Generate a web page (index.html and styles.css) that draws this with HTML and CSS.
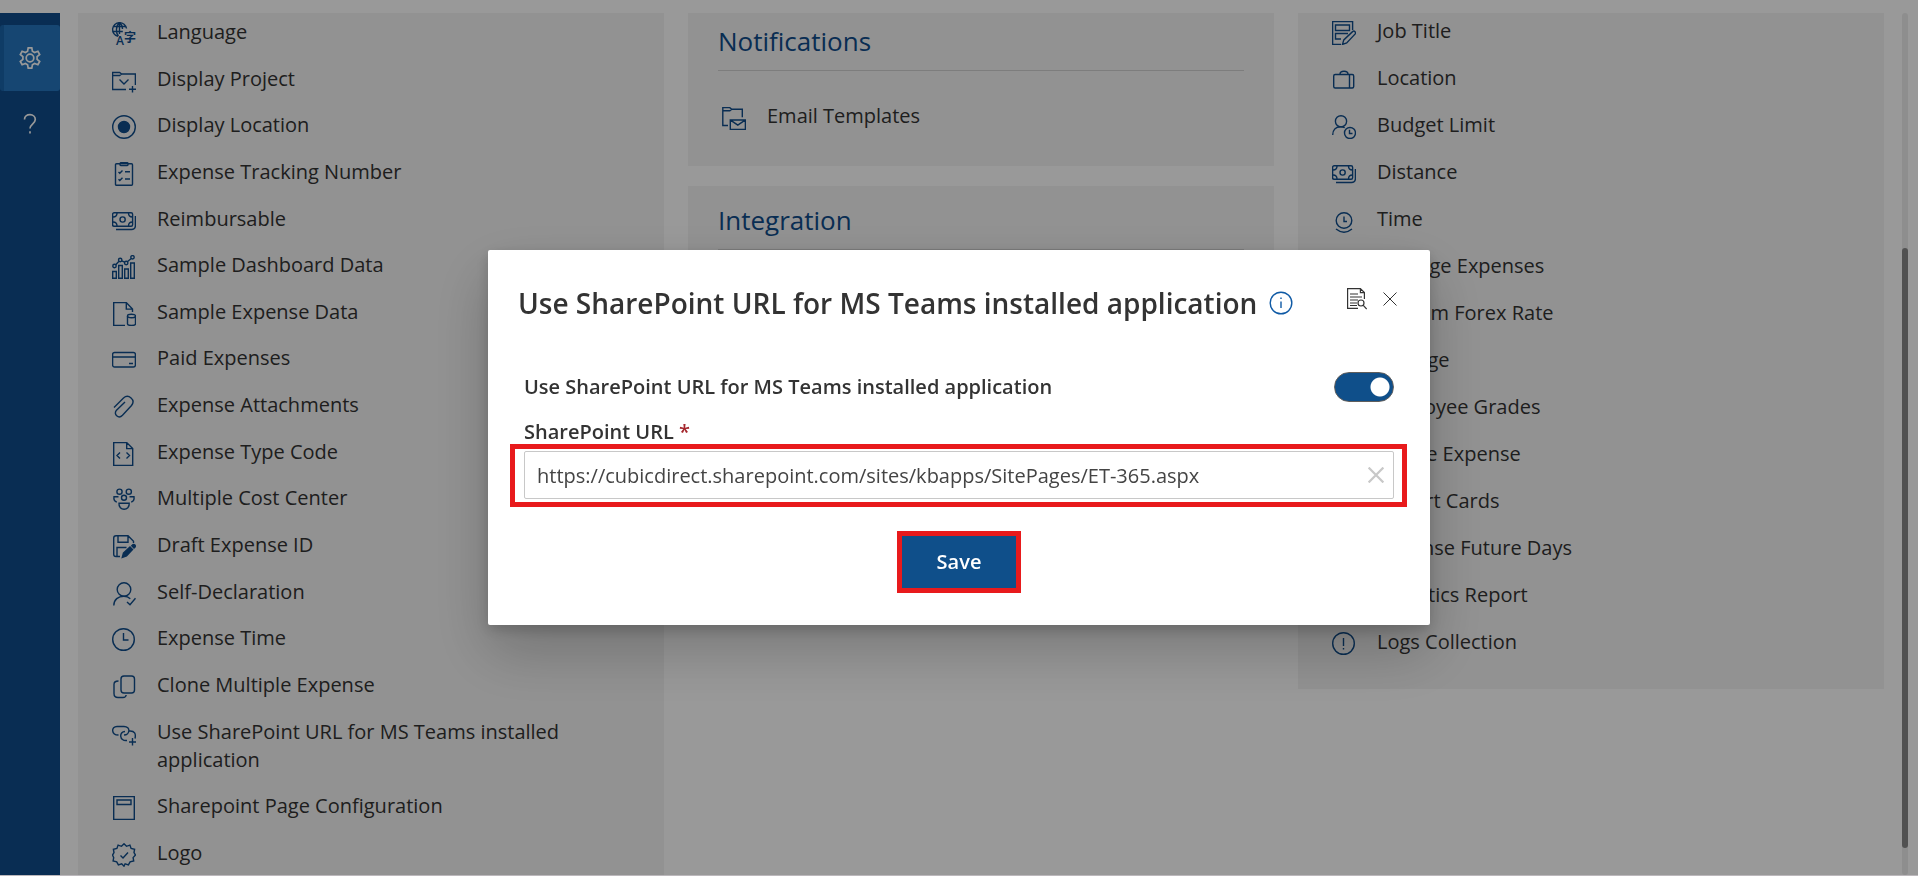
FILE: index.html
```html
<!DOCTYPE html>
<html lang="en">
<head>
<meta charset="utf-8">
<title>Settings</title>
<meta name="viewport" content="width=device-width, initial-scale=1">
<link rel="stylesheet" href="styles.css">
</head>
<body>
<svg class="sprite" aria-hidden="true">
  <symbol id="i-gear" viewBox="0 0 24 24"><path d="M9.600 5.200 10.200 1.800h3.600l.6 3.400 2.200 1.300 3.300-1.200 1.800 3.200-2.600 2.200v2.600l2.600 2.200-1.800 3.200-3.300-1.200-2.200 1.300-.6 3.400h-3.600l-.6-3.400-2.200-1.300-3.300 1.200-1.800-3.200 2.600-2.200v-2.600L2.300 8.500l1.800-3.200 3.300 1.200z"/><circle cx="12" cy="12" r="3.800"/></symbol>
  <symbol id="i-help" viewBox="0 0 24 24"><path d="M6.500 7.500C6.500 4.500 9 2.700 12 2.700s5.300 1.900 5.300 4.900c0 4-5.300 4.600-5.300 9"/><path d="M12 19.300v2.200"/></symbol>
  <symbol id="i-folder" viewBox="0 0 24 24"><path d="M14 20.500H.6V3.500h7l2 1.500h13.800v11M.6 6.500h7l2-1.500M7.500 10.500l4.500 4.500 4.500-4.500M20.500 17v6.500M17 20.200h7"/></symbol>
  <symbol id="i-radio" viewBox="0 0 24 24"><circle cx="12" cy="12" r="11.300"/><circle class="solid" cx="12" cy="12" r="5.500"/></symbol>
  <symbol id="i-clip" viewBox="0 0 24 24"><rect x="3.500" y="1.800" width="17" height="21.500" rx="1"/><rect x="8" y=".6" width="8" height="3" rx="1.200"/><path d="m6.500 10 1.300 1.300L10.500 8.500M13 9.800h5M6.500 17.200l1.300 1.300 2.700-2.800M13 17h5"/></symbol>
  <symbol id="i-money" viewBox="0 0 24 24"><rect x=".6" y="3.800" width="20" height="13.500" rx="1.500"/><circle cx="10.600" cy="10.500" r="2.600"/><path d="M1 8c2.500 0 4-1.500 4-4M1 13c2.500 0 4 1.500 4 4M20.500 8c-2.500 0-4-1.500-4-4M20.500 13c-2.500 0-4 1.500-4 4M23.400 7v9.500c0 2.500-1.500 4-4 4H4"/></symbol>
  <symbol id="i-chart" viewBox="0 0 24 24"><path d="M.7 16.500h3.600v6.800H.7zM6.700 10.500h3.600v12.800H6.700zM12.700 14h3.600v9.300h-3.600zM18.700 8h3.600v15.300h-3.600z"/><circle cx="2.500" cy="11" r="1.700"/><circle cx="8.200" cy="5" r="1.700"/><circle cx="14.200" cy="8" r="1.700"/><circle cx="20.500" cy="2.300" r="1.700"/><path d="M3.700 9.800 7 6.300M9.800 5.800l2.800 1.400M15.300 6.700l4-3.200"/></symbol>
  <symbol id="i-docdb" viewBox="0 0 24 24"><path d="M13 23.400H1.700V.6h12.600l6.200 6.500v3M14.300.6v6.500h6.200"/><ellipse cx="19.500" cy="14" rx="4" ry="1.700"/><path d="M15.500 14v8c0 2 8 2 8 0v-8"/></symbol>
  <symbol id="i-card" viewBox="0 0 24 24"><rect x=".6" y="4.500" width="22.800" height="14.500" rx="2"/><path d="M.6 9h22.800M17 15.500h4"/></symbol>
  <symbol id="i-pin" viewBox="0 0 24 24"><path d="M2 12.500 11.500 3c5-4.500 12.500 2 8 7.500l-9 9.800c-4 4-9.500-1-6-5L13 7"/></symbol>
  <symbol id="i-code" viewBox="0 0 24 24"><path d="M1.700.6h13l6 6v16.800h-19zM14.700.6v6h6M8 10.500 5 13.500l3 3M14.500 10.500l3 3-3 3"/></symbol>
  <symbol id="i-group" viewBox="0 0 24 24"><circle cx="7.500" cy="3.700" r="2.600"/><circle cx="16.800" cy="3.700" r="2.600"/><circle cx="12" cy="9.800" r="2.500"/><path d="M7 15.200h10.200c.8 8-11 8-10.200 0zM6.500 8.700H2c-.5 3 .7 5 2.800 5.300M17.500 8.700H22c.5 3-.7 5-2.800 5.300"/></symbol>
  <symbol id="i-draft" viewBox="0 0 24 24"><path d="M8 21.500H4c-1.500 0-2.300-.8-2.300-2.300V3c0-1.500.8-2.300 2.300-2.300h12l5.500 5.500V8M6 .8v6.500h10V.8M5 21v-8.500h9.500"/><path class="solid" d="m11.500 18 6.500-6 2.500 2.500-6 6.500-4.200 1.500zM19.800 10.800l1.200-1.200c1.500-.5 2.700.8 2.200 2.200L22 13z"/></symbol>
  <symbol id="i-usercheck" viewBox="0 0 24 24"><circle cx="12" cy="7.500" r="6.800"/><path d="M1.800 23.500c0-6 4.500-9.300 10-9.300 3 0 5 1 6.500 2.500M15 20l3 2.800 5.500-6.500"/></symbol>
  <symbol id="i-clock" viewBox="0 0 24 24"><circle cx="11.500" cy="11.500" r="10.800"/><path d="M11.500 5v7h5"/></symbol>
  <symbol id="i-clone" viewBox="0 0 24 24"><rect x="9" y="1" width="13.500" height="17" rx="3"/><path d="M6.500 6C3 6 2 7 2 9.500v9c0 3 1 4 4 4h5c2 0 3-1 3.200-2.500"/></symbol>
  <symbol id="i-link" viewBox="0 0 24 24"><path d="M6.500 13C-1 13-1 4.500 5 4.500h7c7 0 6 8.500 0 8.500M15 18.500c-8 1-8-9-2-9M17 9c6-.5 7 3 6 7.500M20.500 16v7.500M17 20h7"/></symbol>
  <symbol id="i-page" viewBox="0 0 24 24"><path d="M1.700.6h20.600v22.800H1.700zM5 4h14v4.500H5z"/></symbol>
  <symbol id="i-badge" viewBox="0 0 24 24"><path d="m12 .8 2.500 2.500 3.400-1.200 1.200 3.400 3.500.7-.6 3.500 1.500 2.300-2.400 2.600.6 3.400-3.600.8-1.700 3.100-3.300-1.100L12 23.200l-2.300-2.400-3.300 1.100-1.700-3.100-3.600-.8.6-3.400L.5 12l1.500-2.300-.6-3.500 3.500-.7 1.200-3.400 3.400 1.200zM8.500 12.500l2.500 2.500 5-5.500"/></symbol>
  <symbol id="i-form" viewBox="0 0 24 24"><path d="M9 23.400H.6V.6h20V9M3.500 4h14v5.500h-14zM16 12.500H3.500V18H9M10.500 23.400l1.300-4.500 9-8.500c1.500-1 3.500 1 2.400 2.500l-8.500 9z"/></symbol>
  <symbol id="i-case" viewBox="0 0 24 24"><rect x="1.700" y="6.500" width="20" height="13.500" rx="1.500"/><path d="M8 6.300c0-4 8-4 8 0M17.500 6.500V20"/></symbol>
  <symbol id="i-userclock" viewBox="0 0 24 24"><circle cx="9" cy="6.300" r="5.600"/><path d="M.7 20c0-5 3-8.200 8-8.200 1.500 0 3 .3 4 1"/><circle cx="18" cy="18" r="5.500"/><path d="M17.500 14.800v3.700h3"/></symbol>
  <symbol id="i-time" viewBox="0 0 24 24"><circle cx="12" cy="11.500" r="7.800"/><path d="M12 7.500v5h3M4 20c5 4 11 4 16 0"/></symbol>
  <symbol id="i-logs" viewBox="0 0 24 24"><circle cx="11.500" cy="11.500" r="10.800"/><path d="M11.500 6v8M11.500 16v1.500"/></symbol>
  <symbol id="i-mail" viewBox="0 0 24 24"><path d="M6 19.500H.8V1.600h7l2 1.600h10.500v8M.8 4.800h7l2-1.600M8.300 14h15.100v9.400H8.300zM8.500 14.200l7.300 5 7.300-5"/></symbol>
  <symbol id="i-report" viewBox="0 0 20 22"><path d="M11 20.400H.6V.6h12.800l4 4V11M13.400.6v4h4M3 6h8M3 9h12M3 12h8M3 15h7M3 17.500h7"/><circle cx="14" cy="15" r="3"/><path d="m16.300 17.300 3.400 3.700"/></symbol>
  <symbol id="i-x" viewBox="0 0 14 14"><path d="m.5.5 13 13M13.500.5l-13 13"/></symbol>
  <symbol id="i-info" viewBox="0 0 24 24"><circle cx="12" cy="12" r="10.800"/><path d="M12 10.500V17M12 6.500V8"/></symbol>
</svg>

<div class="app">
  <nav class="rail" aria-label="Main">
    <a class="rail-link active" href="#" aria-label="Settings"><svg class="icon"><use href="#i-gear"/></svg></a>
    <a class="rail-link" href="#" aria-label="Help"><svg class="icon"><use href="#i-help"/></svg></a>
  </nav>

  <main class="columns">
    <section class="panel panel-tall">
      <ul class="list">
        <li><a href="#"><svg class="icon" viewBox="0 0 24 24" aria-hidden="true"><path d="M14.500 6.500A7 7 0 1 0 6 14.400M7.500.6C3.600 4 3.600 11 6.500 14M7.500.6c2 1.600 3 4 3 6.400M1.300 4.500h12.500M.8 9.500h10M7.500.6V12"/><text class="glyph" x="4" y="22.500">A</text><text class="glyph" x="12" y="19.500">字</text></svg>Language</a></li>
        <li><a href="#"><svg class="icon"><use href="#i-folder"/></svg>Display Project</a></li>
        <li><a href="#"><svg class="icon"><use href="#i-radio"/></svg>Display Location</a></li>
        <li><a href="#"><svg class="icon"><use href="#i-clip"/></svg>Expense Tracking Number</a></li>
        <li><a href="#"><svg class="icon"><use href="#i-money"/></svg>Reimbursable</a></li>
        <li><a href="#"><svg class="icon"><use href="#i-chart"/></svg>Sample Dashboard Data</a></li>
        <li><a href="#"><svg class="icon"><use href="#i-docdb"/></svg>Sample Expense Data</a></li>
        <li><a href="#"><svg class="icon"><use href="#i-card"/></svg>Paid Expenses</a></li>
        <li><a href="#"><svg class="icon"><use href="#i-pin"/></svg>Expense Attachments</a></li>
        <li><a href="#"><svg class="icon"><use href="#i-code"/></svg>Expense Type Code</a></li>
        <li><a href="#"><svg class="icon"><use href="#i-group"/></svg>Multiple Cost Center</a></li>
        <li><a href="#"><svg class="icon"><use href="#i-draft"/></svg>Draft Expense ID</a></li>
        <li><a href="#"><svg class="icon"><use href="#i-usercheck"/></svg>Self-Declaration</a></li>
        <li><a href="#"><svg class="icon"><use href="#i-clock"/></svg>Expense Time</a></li>
        <li><a href="#"><svg class="icon"><use href="#i-clone"/></svg>Clone Multiple Expense</a></li>
        <li><a href="#"><svg class="icon"><use href="#i-link"/></svg>Use SharePoint URL for MS Teams installed application</a></li>
        <li><a href="#"><svg class="icon"><use href="#i-page"/></svg>Sharepoint Page Configuration</a></li>
        <li><a href="#"><svg class="icon"><use href="#i-badge"/></svg>Logo</a></li>
      </ul>
    </section>

    <div class="stack">
      <section class="panel panel-titled panel-scrolled">
        <h2>Notifications</h2>
        <ul class="list">
          <li><a href="#"><svg class="icon"><use href="#i-mail"/></svg>Email Templates</a></li>
        </ul>
      </section>
      <section class="panel panel-titled">
        <h2>Integration</h2>
      </section>
    </div>

    <section class="panel">
      <ul class="list">
        <li><a href="#"><svg class="icon"><use href="#i-form"/></svg>Job Title</a></li>
        <li><a href="#"><svg class="icon"><use href="#i-case"/></svg>Location</a></li>
        <li><a href="#"><svg class="icon"><use href="#i-userclock"/></svg>Budget Limit</a></li>
        <li><a href="#"><svg class="icon"><use href="#i-money"/></svg>Distance</a></li>
        <li><a href="#"><svg class="icon"><use href="#i-time"/></svg>Time</a></li>
        <li><a href="#"><svg class="icon"><use href="#i-card"/></svg>Manage Expenses</a></li>
        <li><a href="#"><svg class="icon"><use href="#i-money"/></svg>Custom Forex Rate</a></li>
        <li><a href="#"><svg class="icon"><use href="#i-chart"/></svg>Mileage</a></li>
        <li><a href="#"><svg class="icon"><use href="#i-group"/></svg>Employee Grades</a></li>
        <li><a href="#"><svg class="icon"><use href="#i-page"/></svg>Delete Expense</a></li>
        <li><a href="#"><svg class="icon"><use href="#i-card"/></svg>Import Cards</a></li>
        <li><a href="#"><svg class="icon"><use href="#i-clock"/></svg>Expense Future Days</a></li>
        <li><a href="#"><svg class="icon"><use href="#i-chart"/></svg>Analytics Report</a></li>
        <li><a href="#"><svg class="icon"><use href="#i-logs"/></svg>Logs Collection</a></li>
      </ul>
    </section>
  </main>

  <div class="scrollbar"><div class="thumb"></div></div>
</div>

<div class="overlay">
  <div class="modal" role="dialog" aria-modal="true" aria-labelledby="dialog-title">
    <header class="modal-head">
      <h1 id="dialog-title">Use SharePoint URL for MS Teams installed application</h1>
      <button class="plain info" type="button" aria-label="Information"><svg><use href="#i-info"/></svg></button>
      <div class="tools">
        <button class="plain report" type="button" aria-label="View log"><svg><use href="#i-report"/></svg></button>
        <button class="plain close" type="button" aria-label="Close"><svg><use href="#i-x"/></svg></button>
      </div>
    </header>
    <form class="modal-form">
      <div class="switch-row">
        <label for="use-url">Use SharePoint URL for MS Teams installed application</label>
        <input class="switch" id="use-url" type="checkbox" role="switch" checked>
      </div>
      <label for="url">SharePoint URL <span class="required">*</span></label>
      <div class="highlight highlight-field">
        <div class="field">
          <input id="url" type="text" value="https://cubicdirect.sharepoint.com/sites/kbapps/SitePages/ET-365.aspx">
          <button class="plain clear" type="button" aria-label="Clear"><svg><use href="#i-x"/></svg></button>
        </div>
      </div>
      <div class="highlight highlight-save"><button class="save" type="submit">Save</button></div>
    </form>
  </div>
</div>
</body>
</html>
```
FILE: styles.css
```css
* { box-sizing: border-box; }

body {
  margin: 0;
  height: 100vh;
  padding-bottom: 1px;
  overflow: hidden;
  background: #bcb8bc;
  color: #333;
  font: 20px/28px "Segoe UI", "Open Sans", "Noto Sans CJK SC", sans-serif;
}

h1, h2, ul { margin: 0; padding: 0; }
ul { list-style: none; }
a { color: inherit; text-decoration: none; }
svg { display: block; fill: none; stroke: currentColor; }
.sprite { position: absolute; width: 0; height: 0; }
.glyph { fill: currentColor; stroke: none; font-size: 12px; font-weight: 600; }
.solid { fill: currentColor; }
.icon { flex: none; width: 24px; height: 24px; overflow: visible; stroke-width: 1.4; }

.app {
  display: flex;
  height: 100%;
  padding-top: 13px;
  background: #fff;
}

.rail {
  flex: none;
  width: 60px;
  padding-top: 12px;
  background: #0f4c8a;
}
.rail-link {
  display: flex;
  align-items: center;
  justify-content: center;
  height: 66px;
  border-radius: 3px;
  color: #fff;
}
.rail-link .icon { stroke-width: 1.7; }
.rail-link.active {
  background: #2676bf;
  border-left: 4px solid #1a65aa;
  padding-right: 4px;
}

.columns {
  flex: 1;
  display: grid;
  grid-template-columns: repeat(3, 1fr);
  gap: 24px;
  align-items: start;
  padding: 0 18px;
}
.panel { background: #f3f3f3; padding: 4px 30px 33px; }
.panel-tall { height: 100%; padding-top: 5px; padding-bottom: 8px; }
.stack { display: grid; gap: 20px; }

.list { display: flex; flex-direction: column; gap: 19px; }
.panel-tall .list { height: 100%; gap: 0; justify-content: space-between; }
.list a { display: flex; gap: 21px; padding-left: 4px; }
.list .icon { margin-top: 4px; color: #0f4c8a; }

.panel-titled { padding-top: 16px; padding-bottom: 36px; }
.panel-titled.panel-scrolled { padding-top: 10px; }
.panel-titled h2 {
  padding-bottom: 11px;
  border-bottom: 1px solid #d0d0d0;
  color: #0f4c8a;
  font-size: 26px;
  line-height: 36px;
  font-weight: 400;
}
.panel-titled .list { padding-top: 31px; }

.scrollbar {
  flex: none;
  width: 6px;
  margin-right: 10px;
  border-radius: 3px;
  background: #ededed;
  display: grid;
  grid-template-rows: 235fr 601fr 27fr;
}
.thumb { grid-row: 2; border-radius: 3px; background: #888; }

.overlay {
  position: fixed;
  inset: 0 0 1px;
  display: flex;
  align-items: center;
  justify-content: center;
  background: rgba(0, 0, 0, .4);
}
.modal {
  width: min(942px, 94vw);
  padding: 30px 30px 32px;
  border-radius: 2px;
  background: #fff;
  box-shadow: 0 26px 58px rgba(0, 0, 0, .22), 0 5px 14px rgba(0, 0, 0, .18);
}
.modal-head { display: flex; align-items: flex-start; }
.modal-head h1 { font-size: 28px; line-height: 46px; font-weight: 600; }
.plain { padding: 0; border: 0; background: none; color: #333; cursor: pointer; }
.info { margin: 11px 0 0 12px; color: #0f5aa5; }
.info svg { width: 24px; height: 24px; stroke-width: 1.4; }
.tools { display: flex; align-items: center; gap: 16px; margin: 8px 3px 0 auto; }
.report svg { width: 20px; height: 22px; stroke-width: 1.2; }
.close svg { width: 14px; height: 14px; }

.modal-form { padding: 46px 6px 0; }
.modal-form label { font-weight: 600; }
.modal-form > label { display: block; margin-top: 16px; }
.required { color: #a4262c; }
.switch-row { display: flex; align-items: center; justify-content: space-between; }
.switch {
  appearance: none;
  width: 60px;
  height: 30px;
  margin: 0;
  border: 1px solid #605e5c;
  border-radius: 15px;
  background: radial-gradient(circle at 45px 14px, #fff 9px, #0f4f8a 10px);
}

.highlight { border: 5px solid #e81a1c; }
.highlight-field { margin: -2px -13px 0 -14px; padding: 2px 8px 3px 9px; }
.field { display: flex; align-items: center; height: 48px; border: 1px solid #c8c8c8; border-radius: 2px; }
.field input {
  flex: 1;
  min-width: 0;
  padding: 2px 12px 0;
  border: 0;
  outline: 0;
  background: none;
  color: #444;
  font: inherit;
}
.clear { margin-right: 9px; color: #c8c8c8; }
.clear svg { width: 16px; height: 16px; stroke-width: 2; }
.highlight-save { width: 124px; margin: 24px auto 0; }
.save {
  display: block;
  width: 100%;
  height: 52px;
  padding: 0;
  border: 0;
  background: #0f4f8a;
  color: #fff;
  font: inherit;
  font-weight: 600;
}
```
